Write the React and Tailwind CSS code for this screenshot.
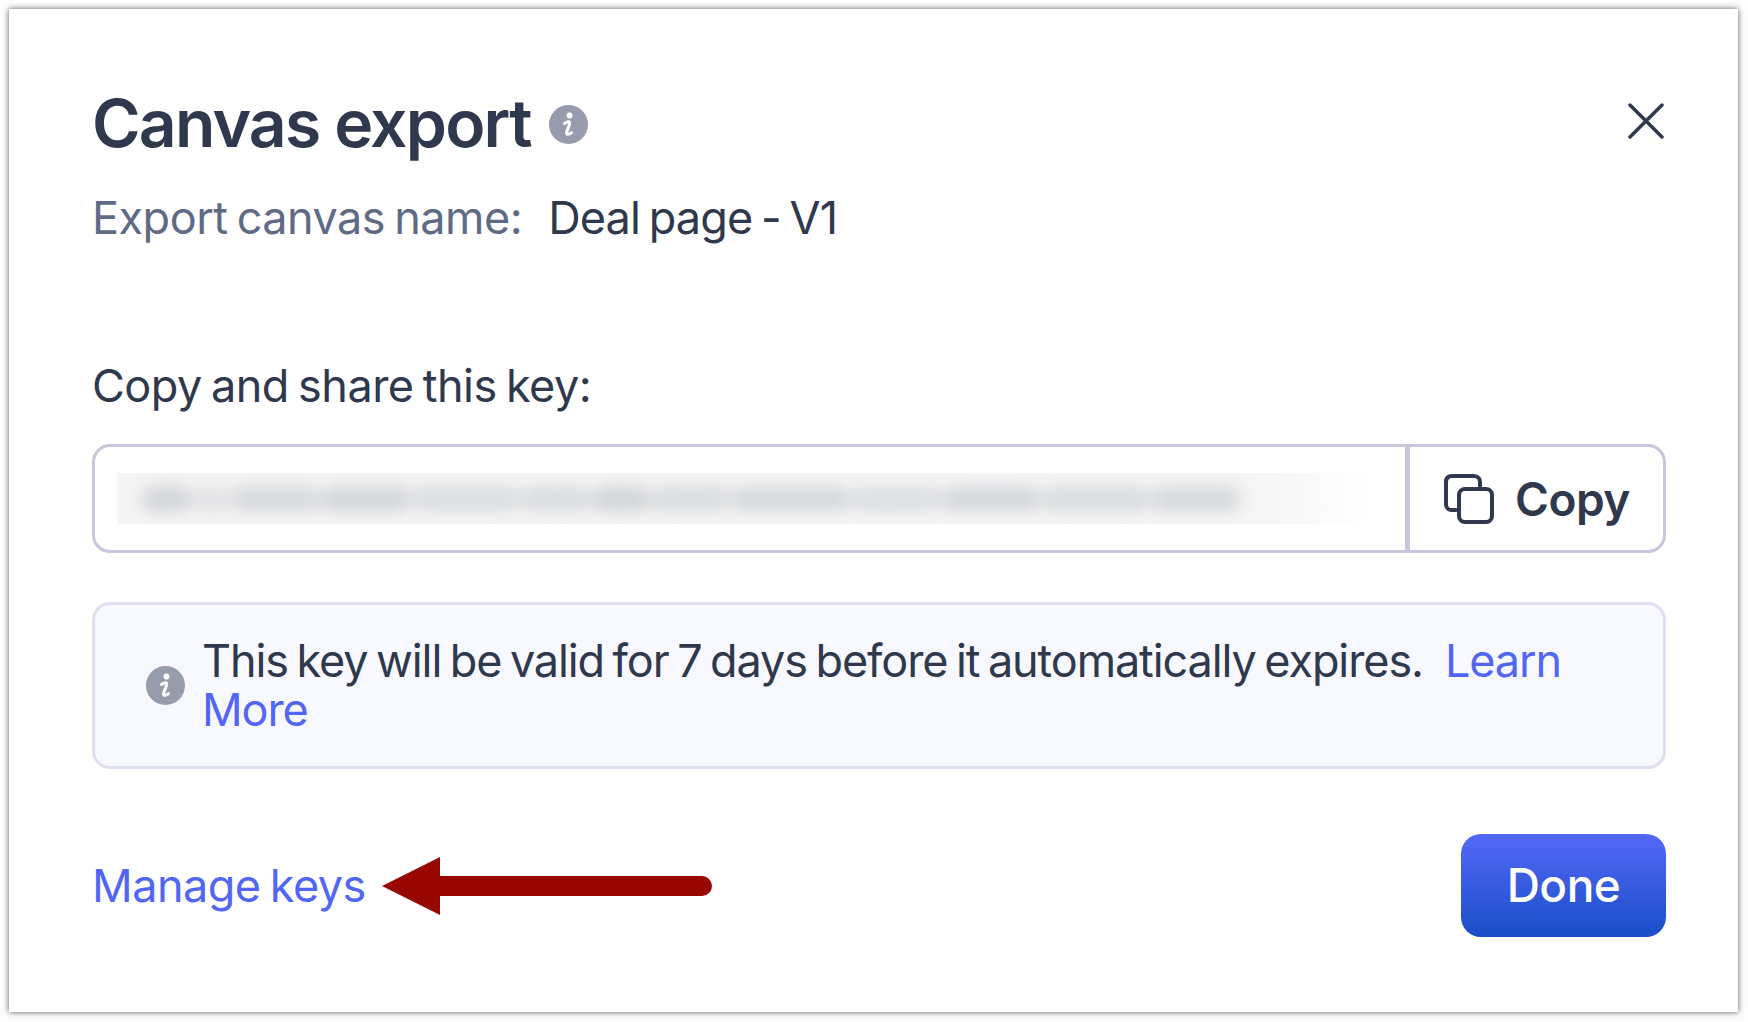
import React from "react";

function InfoIcon({ className }) {
  return (
    <svg viewBox="0 0 39 39" className={className}>
      <circle cx="19.5" cy="19.5" r="19.5" fill="#969cab" />
      <circle cx="20.5" cy="10.5" r="3" fill="#fff" />
      <path d="M15.5 18.5c2-1.6 4.5-2.2 5.2-1 .7 1.300-2.700 7.500-3.200 10-.4 2.200 2.200 2.200 5 .2" fill="none" stroke="#fff" strokeWidth="3" strokeLinecap="round" strokeLinejoin="round" />
    </svg>
  );
}

const blobs = [
  "w-[50px] bg-[#d2d4d7]", "w-[40px] bg-[#e2e3e5]", "w-[90px] bg-[#d6d8db]", "w-[90px] bg-[#d3d5d8]", "w-[110px] bg-[#dbdde0]", "w-[70px] bg-[#d9dbde]",
  "w-[60px] bg-[#d2d4d7]", "w-[80px] bg-[#d9dbde]", "w-[120px] bg-[#d6d8db]", "w-[90px] bg-[#dcdee1]", "w-[100px] bg-[#d5d7da]", "w-[110px] bg-[#d9dbde]", "w-[90px] bg-[#d6d8db]",
];

export default function App() {
  return (
    <div className="w-[1748px] h-[1022px] bg-[#fdfdfd] pt-[9px] pl-[9px] font-['Inter',sans-serif] overflow-hidden">
      <div className="relative w-[1729px] h-[1003px] bg-white shadow-[0_0_6px_rgba(0,0,0,0.65)] pl-[83px] pr-[72px] pt-[79px] flex flex-col">
        <div className="flex items-center h-[70px]">
          <h1 className="text-[66px] leading-[70px] font-semibold tracking-[-1.8px] text-[#2f384c]">Canvas export</h1>
          <InfoIcon className="w-[39px] h-[39px] ml-[18px] mt-[2px]" />
          <svg viewBox="0 0 36 36" className="w-[36px] h-[36px] ml-auto mr-[2px] mt-[-4px]" fill="none" stroke="#2f384c" strokeWidth="3.500" strokeLinecap="round">
            <path d="M2 2l32 32M34 2L2 34" />
          </svg>
        </div>
        <div className="flex items-center h-[56px] mt-[32px] text-[45px] leading-[56px] tracking-[-0.5px] [word-spacing:-3px]">
          <span className="text-[#5f6b85]">Export canvas name:</span>
          <span className="ml-[26px] text-[#2f384c] tracking-[-0.9px]">Deal page - V1</span>
        </div>
        <div className="mt-[112px] h-[56px] text-[45px] leading-[56px] tracking-[-0.5px] [word-spacing:-3px] text-[#2f384c]">Copy and share this key:</div>
        <div className="mt-[30px] h-[109px] flex rounded-[18px] border-[3px] border-[#c9c6dc] bg-white">
          <div className="flex-1 flex items-center pl-[22px] pr-[34px] min-w-0">
            <div className="w-full h-[51px] overflow-hidden bg-[linear-gradient(90deg,#f5f5f5_0%,#f6f6f6_92%,#ffffff_100%)] flex items-center">
              <div className="w-full flex items-center pl-[24px] pr-[40px] blur-[8px]">
                {blobs.map((c, i) => (
                  <div key={i} className={"h-[26px] rounded-full shrink-0 " + c} />
                ))}
              </div>
            </div>
          </div>
          <div className="w-[5px] bg-[#c9c6dc]" />
          <div className="w-[253px] flex items-center pl-[34px]">
            <svg viewBox="0 0 50 50" className="w-[50px] h-[50px]" fill="none" stroke="#2f384c" strokeWidth="4" strokeLinecap="round" strokeLinejoin="round">
              <rect x="15" y="15" width="33" height="33" rx="6" />
              <path d="M36 12V8c0-3-2-6-6-6H8C4 2 2 4 2 8v22c0 3 2 6 5 6h5" />
            </svg>
            <span className="ml-[21px] text-[46px] leading-[56px] font-semibold tracking-[-0.5px] text-[#2f384c]">Copy</span>
          </div>
        </div>
        <div className="mt-[49px] h-[167px] flex items-center rounded-[18px] border-[3px] border-[#e0dff1] bg-[#f8f9ff] pl-[51px] pr-[60px]">
          <InfoIcon className="w-[39px] h-[39px] shrink-0" />
          <p className="ml-[17px] text-[45px] leading-[48.500px] tracking-[-1.1px] [word-spacing:-3px] text-[#2f384c]">
            This key will be valid for 7 days before it automatically expires.<span className="ml-[22px] text-[#5266f6]">Learn More</span>
          </p>
        </div>
        <div className="mt-[65px] flex items-center justify-between">
          <div className="flex items-center">
            <span className="text-[45px] leading-[56px] tracking-[-0.5px] [word-spacing:-3px] text-[#5266f6]">Manage keys</span>
            <svg viewBox="0 0 331 58" className="w-[331px] h-[58px] ml-[16px]" fill="#990800">
              <path d="M0 29L58 0v19h262a10 10 0 0 1 0 20H58v19z" />
            </svg>
          </div>
          <button className="w-[205px] h-[103px] rounded-[20px] bg-[linear-gradient(180deg,#5468f6,#1a4ec8)] text-white text-[46px] font-medium tracking-[-0.5px]">Done</button>
        </div>
      </div>
    </div>
  );
}
